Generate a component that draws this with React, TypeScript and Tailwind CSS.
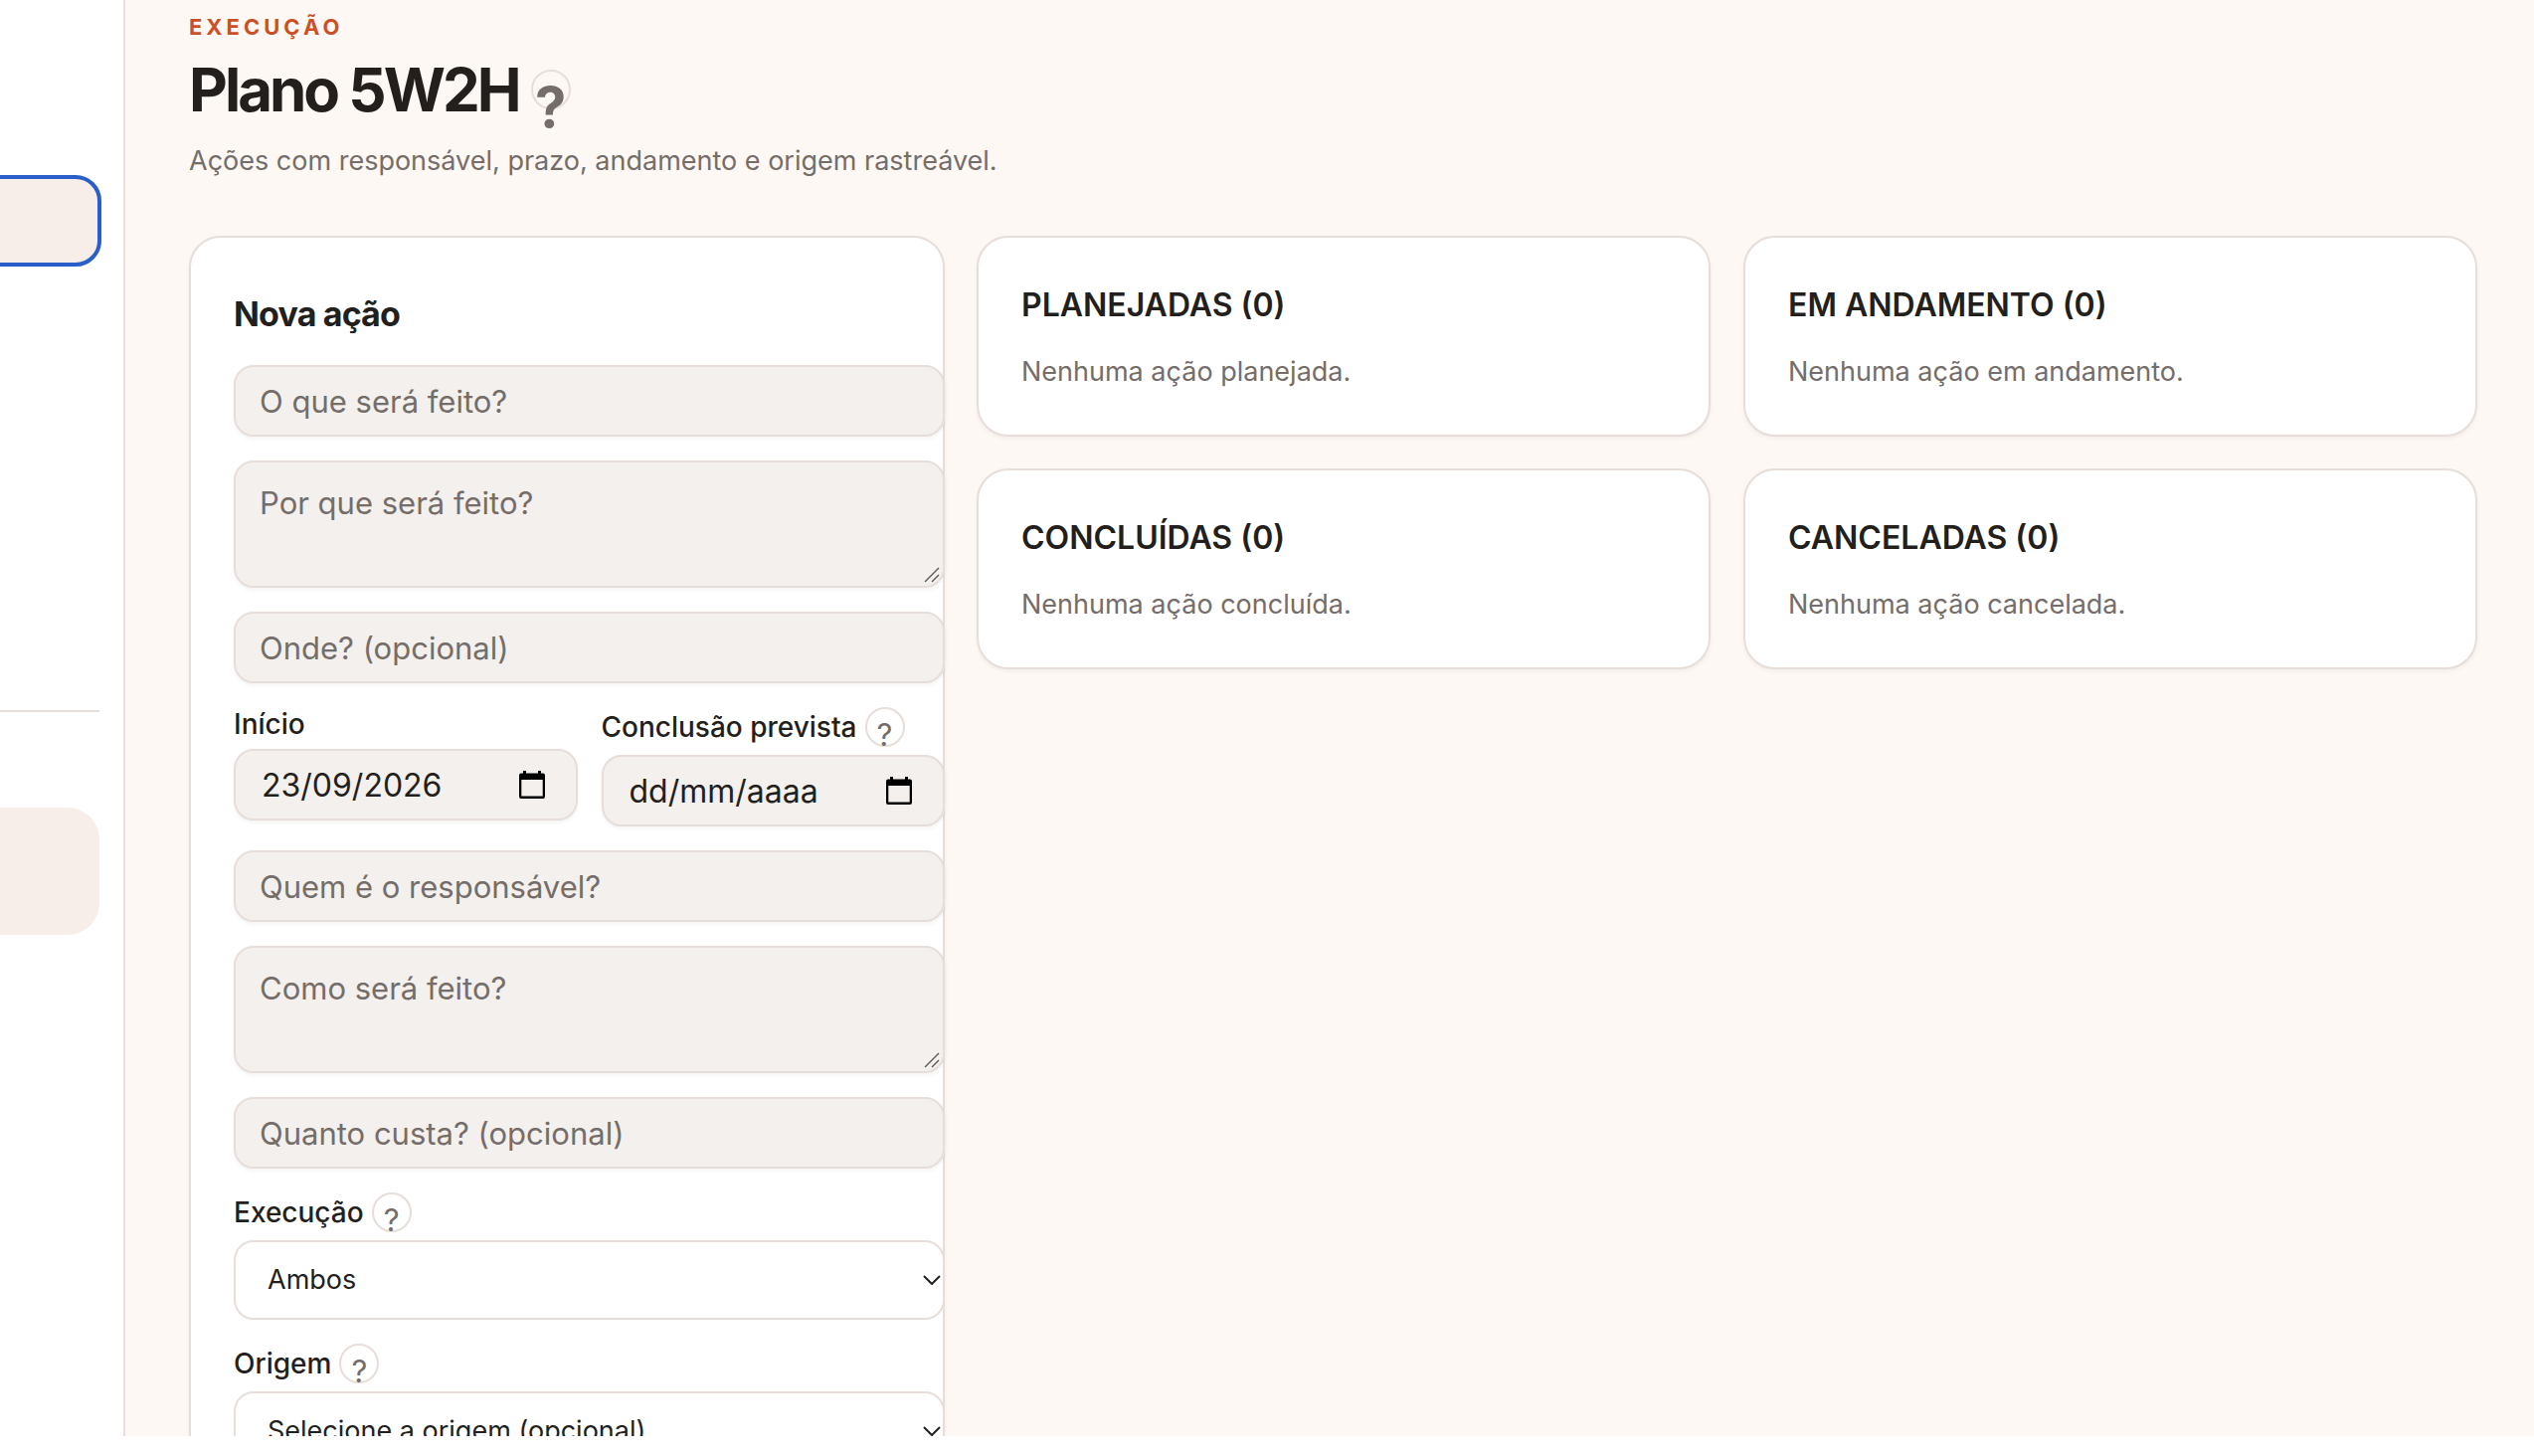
import type { ReactNode } from "react";

const FIELD =
  "w-full rounded-[20px] border-2 border-[#e7deda] bg-[#f4f0ed] px-6 text-[#231f1c] shadow-[0_2px_4px_rgba(0,0,0,0.05)] placeholder:text-[#756d69]";

const COLUMNS = [
  { title: "PLANEJADAS", count: 0, empty: "Nenhuma ação planejada." },
  { title: "EM ANDAMENTO", count: 0, empty: "Nenhuma ação em andamento." },
  { title: "CONCLUÍDAS", count: 0, empty: "Nenhuma ação concluída." },
  { title: "CANCELADAS", count: 0, empty: "Nenhuma ação cancelada." },
];

function Help({ topic, large }: { topic: string; large?: boolean }) {
  return (
    <button
      type="button"
      aria-label={`Ajuda: ${topic}`}
      className={`flex size-10 shrink-0 items-center justify-center rounded-full border-2 border-[#e7deda] leading-none text-[#756d69] ${
        large ? "pt-9 text-[56px] font-bold" : "pt-3.5 text-[31px]"
      }`}
    >
      ?
    </button>
  );
}

function TextField({ label }: { label: string }) {
  return (
    <input
      type="text"
      aria-label={label}
      placeholder={label}
      className={`h-[72px] text-[31px] ${FIELD}`}
    />
  );
}

function TextArea({ label }: { label: string }) {
  return (
    <div className="relative">
      <textarea
        aria-label={label}
        placeholder={label}
        className={`block h-32 resize-none pt-[17px] text-[31px] leading-[48px] ${FIELD}`}
      />
      {/* resize grip */}
      <svg
        viewBox="0 0 16 16"
        className="pointer-events-none absolute right-[5px] bottom-[5px] size-4 stroke-[#5a5856]"
        strokeWidth="1.4"
        aria-hidden
      >
        <path d="M1 15 15 1M8 15l7-7" />
      </svg>
    </div>
  );
}

function DateField({ id, value }: { id: string; value?: string }) {
  return (
    <div className={`flex h-[72px] items-center text-[32px] ${FIELD}`}>
      <input
        id={id}
        type="text"
        defaultValue={value}
        placeholder="dd/mm/aaaa"
        className="w-full min-w-0 bg-transparent px-0.5 pt-0.5 placeholder:text-[#231f1c]"
      />
      <button type="button" aria-label="Abrir calendário" className="mr-[7px] shrink-0">
        <svg viewBox="0 0 26 28" className="h-7 w-[26px]" aria-hidden>
          <path
            fillRule="evenodd"
            d="M4 0h3v2.5h12V0h3v2.5h2a2 2 0 0 1 2 2V26a2 2 0 0 1-2 2H2a2 2 0 0 1-2-2V4.500a2 2 0 0 1 2-2h2ZM2.300 9v16.500h21.400V9Z"
          />
        </svg>
      </button>
    </div>
  );
}

function SelectField({
  id,
  label,
  children,
}: {
  id: string;
  label: string;
  children: ReactNode;
}) {
  return (
    <div className="flex flex-col gap-2">
      <div className="flex h-10 items-center gap-2">
        <label htmlFor={id} className="text-[28px] font-medium">
          {label}
        </label>
        <Help topic={label} />
      </div>
      <div className="relative">
        <select
          id={id}
          className="block h-20 w-full appearance-none rounded-[20px] border-2 border-[#e7deda] bg-white px-8 text-[27px]"
        >
          {children}
        </select>
        <svg
          viewBox="0 0 18 10"
          className="pointer-events-none absolute top-[35px] right-1 h-2.5 w-[18px] fill-none stroke-[#231f1c]"
          strokeWidth="2"
          aria-hidden
        >
          <path d="m1 1 8 8 8-8" />
        </svg>
      </div>
    </div>
  );
}

function ActionCard() {
  return (
    <section className="rounded-[32px] border-2 border-[#e7deda] bg-white pt-[50px] pb-11 pl-[43px] shadow-[0_2px_4px_rgba(0,0,0,0.05)]">
      {/* fields run over the card's right border */}
      <form className="-mr-0.5 flex flex-col gap-6">
        <h2 className="text-[34px] leading-[54px] font-bold tracking-tight">Nova ação</h2>
        <TextField label="O que será feito?" />
        <TextArea label="Por que será feito?" />
        <TextField label="Onde? (opcional)" />
        <div className="grid grid-cols-2 items-start gap-6">
          <div className="flex flex-col gap-2">
            <label htmlFor="inicio" className="text-[28px] leading-[34px] font-medium">
              Início
            </label>
            <DateField id="inicio" value="23/09/2026" />
          </div>
          <div className="flex flex-col gap-2">
            <div className="flex h-10 items-center gap-2">
              <label htmlFor="conclusao" className="text-[28px] font-medium">
                Conclusão prevista
              </label>
              <Help topic="Conclusão prevista" />
            </div>
            <DateField id="conclusao" />
          </div>
        </div>
        <TextField label="Quem é o responsável?" />
        <TextArea label="Como será feito?" />
        <TextField label="Quanto custa? (opcional)" />
        <SelectField id="execucao" label="Execução">
          <option>Ambos</option>
        </SelectField>
        <SelectField id="origem" label="Origem">
          <option>Selecione a origem (opcional)</option>
        </SelectField>
      </form>
    </section>
  );
}

export default function App() {
  return (
    <div className="h-screen bg-white pb-5 font-['Inter',sans-serif] text-[#231f1c]">
      <div className="flex h-full overflow-hidden bg-[#fdf8f4]">
        <aside className="w-[126px] shrink-0 border-r-2 border-[#e7deda] bg-white pt-[178px] pr-6">
          <a
            href="#plano"
            aria-label="Plano 5W2H"
            className="-ml-2 block h-[88px] rounded-r-3xl bg-[#f7eee9] outline-4 -outline-offset-2 outline-[#2a5fc9]"
          />
          <hr className="mt-[448px] border-t-2 border-[#e7deda]" />
          <div className="mt-24 h-32 rounded-r-[32px] bg-[#f7eee9]" />
        </aside>

        <main className="min-w-0 flex-1 pt-[11px] pr-[57px] pl-16">
          <p className="text-[22px] leading-8 font-bold tracking-[4px] text-[#cb5027]">
            EXECUÇÃO
          </p>
          <div className="mt-[15px] flex items-center gap-3">
            <h1 className="text-[60px] leading-[64px] font-bold tracking-tighter">
              Plano 5W2H
            </h1>
            <Help topic="Plano 5W2H" large />
          </div>
          <p className="mt-5 text-[27px] leading-10 text-[#756d69]">
            Ações com responsável, prazo, andamento e origem rastreável.
          </p>

          <div className="mt-[55px] grid grid-cols-[760px_1fr] items-start gap-8">
            <ActionCard />
            <div className="grid grid-cols-2 gap-x-[33px] gap-y-8">
              {COLUMNS.map((c) => (
                <section
                  key={c.title}
                  className="rounded-[32px] border-2 border-[#e7deda] bg-white p-[43px] shadow-[0_2px_4px_rgba(0,0,0,0.05)]"
                >
                  <h2 className="text-[32px] leading-[50px] font-semibold">
                    {c.title} ({c.count})
                  </h2>
                  <p className="mt-[22px] text-[27px] leading-10 text-[#756d69]">
                    {c.empty}
                  </p>
                </section>
              ))}
            </div>
          </div>
        </main>
      </div>
    </div>
  );
}
